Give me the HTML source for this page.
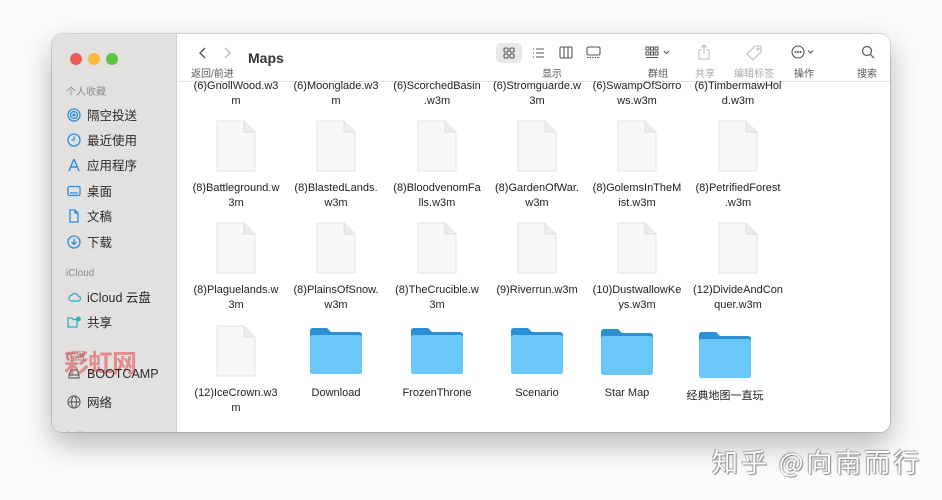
<!DOCTYPE html>
<html><head><meta charset="utf-8"><style>
*{margin:0;padding:0;box-sizing:border-box}
body{width:942px;height:500px;background:#fbfbfb;position:relative;overflow:hidden;font-family:"Liberation Sans","Noto Sans CJK SC",sans-serif;color:#222}
.win{position:absolute;left:52px;top:34px;width:838px;height:398px;border-radius:10px;background:#fff;overflow:hidden;box-shadow:0 12px 30px rgba(0,0,0,.28),0 0 0 1px rgba(0,0,0,.12)}
.side{position:absolute;left:0;top:0;width:125px;height:398px;background:#e3e1df;border-right:1px solid #d4d2d0}
.dot{position:absolute;top:19px;width:12px;height:12px;border-radius:50%}
.sh{position:absolute;left:14px;font-size:10px;color:#8c8a88}
.si{position:absolute;left:15px;font-size:12.5px;color:#2a2a2a;display:flex;align-items:center;gap:6px}
.si svg{width:14px;height:14px}
.main{position:absolute;left:126px;top:0;right:0;bottom:0}
.tb{position:absolute;left:0;top:0;right:0;height:48px;border-bottom:1px solid #e2e2e2;background:#fff}
.t{position:absolute;font-size:10px;color:#555}
.lab{position:absolute;width:100px;text-align:center;font-size:11px;line-height:14.5px;color:#222}
.doc{position:absolute;width:40px;height:52px}
.fold{position:absolute;width:56px;height:48px}
.wm{position:absolute;left:712px;top:443px;font-size:26px;color:#fff;text-shadow:0 0 1px #777,1px 1px 1px #888,-1px -1px 1px #aaa;letter-spacing:3px;font-family:"Noto Sans CJK SC",sans-serif}
</style></head><body>
<div class="win">
 <div class="side">
  <div class="dot" style="left:18px;background:#ee5d55"></div>
  <div class="dot" style="left:36px;background:#f6bd3b"></div>
  <div class="dot" style="left:54px;background:#5fc544"></div>
  <div class="sh" style="top:49px">个人收藏</div>
  <div class="si" style="top:71px"><svg viewBox="0 0 14 14" fill="none" stroke="#2c8ee0" stroke-width="1.3"><circle cx="7" cy="7" r="6"/><circle cx="7" cy="7" r="3.5"/><circle cx="7" cy="7" r="1"/></svg>隔空投送</div>
  <div class="si" style="top:96px"><svg viewBox="0 0 14 14" fill="none" stroke="#2c8ee0" stroke-width="1.3"><circle cx="7" cy="7" r="6"/><path d="M7 3.5V7H4.5"/></svg>最近使用</div>
  <div class="si" style="top:121px"><svg viewBox="0 0 14 14" fill="none" stroke="#2c8ee0" stroke-width="1.4"><path d="M7 1L2 13M7 1l5 12M3 9h8"/></svg>应用程序</div>
  <div class="si" style="top:147px"><svg viewBox="0 0 14 14" fill="none" stroke="#2c8ee0" stroke-width="1.3"><rect x="1" y="2.5" width="12" height="9" rx="1.5"/><path d="M3 9h8"/></svg>桌面</div>
  <div class="si" style="top:172px"><svg viewBox="0 0 14 14" fill="none" stroke="#2c8ee0" stroke-width="1.3"><path d="M3 1h5l3 3v9H3z M8 1v3h3"/></svg>文稿</div>
  <div class="si" style="top:198px"><svg viewBox="0 0 14 14" fill="none" stroke="#2c8ee0" stroke-width="1.3"><circle cx="7" cy="7" r="6"/><path d="M7 3.5v6M4.5 7l2.5 2.5L9.5 7"/></svg>下载</div>
  <div class="sh" style="top:234px">iCloud</div>
  <div class="si" style="top:253px"><svg viewBox="0 0 14 14" fill="none" stroke="#2ab0c8" stroke-width="1.3"><path d="M4 11h7a2.5 2.5 0 000-5 3.5 3.5 0 00-6.5-.5A2.8 2.8 0 004 11z"/></svg>iCloud 云盘</div>
  <div class="si" style="top:278px"><svg viewBox="0 0 14 14" fill="none" stroke="#2ab0c8" stroke-width="1.3"><path d="M1 3h4l1 1.5h4V12H1z"/><circle cx="11.5" cy="4" r="1.8" fill="#2ab0c8"/></svg>共享</div>
  <div class="sh" style="top:314px">位置</div>
  <div style="position:absolute;left:12px;top:310px;font-size:25px;font-weight:bold;color:rgba(225,70,70,.55);font-family:'Noto Sans CJK SC',sans-serif;letter-spacing:-1px">彩虹网</div>
  <div class="si" style="top:333px"><svg viewBox="0 0 14 14" fill="none" stroke="#666" stroke-width="1.2"><path d="M2 8l2-5h6l2 5v3H2z M2 8h10"/></svg>BOOTCAMP</div>
  <div class="si" style="top:358px"><svg viewBox="0 0 14 14" fill="none" stroke="#666" stroke-width="1.2"><circle cx="7" cy="7" r="6"/><ellipse cx="7" cy="7" rx="2.5" ry="6"/><path d="M1 7h12"/></svg>网络</div>
  <div class="sh" style="top:394px">标签</div>
 </div>
 <div class="main">
  <div class="tb">
   <svg style="position:absolute;left:20px;top:13px" width="10" height="12" viewBox="0 0 10 12" fill="none" stroke="#555" stroke-width="1.4"><path d="M7 1L2 6l5 5"/></svg>
   <svg style="position:absolute;left:44px;top:13px" width="10" height="12" viewBox="0 0 10 12" fill="none" stroke="#bbb" stroke-width="1.4"><path d="M3 1l5 5-5 5"/></svg>
   <div style="position:absolute;left:70px;top:16px;font-size:14px;font-weight:bold;color:#333">Maps</div>
   <div class="t" style="left:13px;top:31px">返回/前进</div>
   <div style="position:absolute;left:318px;top:9px;width:26px;height:20px;border-radius:5px;background:#e8e8e8"></div>
   <svg style="position:absolute;left:325px;top:13px" width="12" height="12" viewBox="0 0 12 12" fill="none" stroke="#555" stroke-width="1.1"><rect x="1" y="1" width="4" height="4" rx="1"/><rect x="7" y="1" width="4" height="4" rx="1"/><rect x="1" y="7" width="4" height="4" rx="1"/><rect x="7" y="7" width="4" height="4" rx="1"/></svg>
   <svg style="position:absolute;left:354px;top:13px" width="13" height="12" viewBox="0 0 13 12" fill="none" stroke="#555" stroke-width="1.1"><path d="M1 2h1M4 2h8M1 6h1M4 6h8M1 10h1M4 10h8"/></svg>
   <svg style="position:absolute;left:381px;top:12px" width="14" height="13" viewBox="0 0 14 13" fill="none" stroke="#555" stroke-width="1.1"><rect x="1" y="1" width="12" height="11" rx="1.5"/><path d="M5 1v11M9 1v11"/></svg>
   <svg style="position:absolute;left:408px;top:12px" width="15" height="13" viewBox="0 0 15 13" fill="none" stroke="#555" stroke-width="1.1"><rect x="1" y="1" width="13" height="8" rx="1.5"/><path d="M1 11.5h13" stroke-dasharray="1.5 1"/></svg>
   <div class="t" style="left:364px;top:31px">显示</div>
   <svg style="position:absolute;left:467px;top:12px" width="28" height="13" viewBox="0 0 28 13" fill="none" stroke="#555" stroke-width="1"><rect x="1" y="1" width="3" height="3"/><rect x="5.5" y="1" width="3" height="3"/><rect x="10" y="1" width="3" height="3"/><rect x="1" y="6" width="3" height="3"/><rect x="5.5" y="6" width="3" height="3"/><rect x="10" y="6" width="3" height="3"/><path d="M1 11.5h12M19 5l2.5 2.5L24 5"/></svg>
   <div class="t" style="left:470px;top:31px">群组</div>
   <svg style="position:absolute;left:520px;top:10px" width="12" height="16" viewBox="0 0 12 16" fill="none" stroke="#bbb" stroke-width="1.1"><path d="M4 6H1v9h10V6H8M6 10V1M3.5 3.5L6 1l2.5 2.5"/></svg>
   <div class="t" style="left:517px;top:31px;color:#aaa">共享</div>
   <svg style="position:absolute;left:568px;top:11px" width="16" height="16" viewBox="0 0 16 16" fill="none" stroke="#bbb" stroke-width="1.1"><path d="M9 1h6v6l-8 8-6-6z"/><circle cx="12" cy="4" r="1"/></svg>
   <div class="t" style="left:556px;top:31px;color:#aaa">编辑标签</div>
   <svg style="position:absolute;left:613px;top:11px" width="28" height="14" viewBox="0 0 28 14" fill="none" stroke="#555" stroke-width="1.1"><circle cx="7" cy="7" r="6"/><circle cx="4.5" cy="7" r=".5"/><circle cx="7" cy="7" r=".5"/><circle cx="9.5" cy="7" r=".5"/><path d="M17 5.5l2.5 2.5L22 5.5"/></svg>
   <div class="t" style="left:616px;top:31px">操作</div>
   <svg style="position:absolute;left:683px;top:11px" width="14" height="14" viewBox="0 0 14 14" fill="none" stroke="#555" stroke-width="1.2"><circle cx="6" cy="6" r="4.5"/><path d="M9.5 9.5L13 13"/></svg>
   <div class="t" style="left:679px;top:31px">搜索</div>
  </div>
 </div>
</div>
<div id="grid"></div>
<div class="wm">知乎 @向南而行</div>
<script>
var g=document.getElementById('grid');
var cx=[236,336,437,537,637,738];
function lab(x,y,t){g.insertAdjacentHTML('beforeend','<div class="lab" style="left:'+(x-50)+'px;top:'+y+'px">'+t+'</div>');}
function doc(x,y){g.insertAdjacentHTML('beforeend','<svg class="doc" style="left:'+(x-20)+'px;top:'+y+'px" viewBox="0 0 40 52"><path d="M1 1h27l11 11v39H1z" fill="#f7f7f7" stroke="#e3e3e3"/><path d="M28 1v11h11" fill="#ececec" stroke="#ddd"/></svg>');}
function fold(x,y){g.insertAdjacentHTML('beforeend','<svg class="fold" style="left:'+(x-28)+'px;top:'+y+'px" viewBox="0 0 56 48"><path d="M2 4q0-3 3-3h14l4 4h28q3 0 3 3v36q0 3-3 3H5q-3 0-3-3z" fill="#2d8fd4"/><path d="M2 11q0-3 3-3h46q3 0 3 3v33q0 3-3 3H5q-3 0-3-3z" fill="#6ac8f8"/></svg>');}
var r1=['(6)GnollWood.w3<br>m','(6)Moonglade.w3<br>m','(6)ScorchedBasin<br>.w3m','(6)Stromguarde.w<br>3m','(6)SwampOfSorro<br>ws.w3m','(6)TimbermawHol<br>d.w3m'];
var r2=['(8)Battleground.w<br>3m','(8)BlastedLands.<br>w3m','(8)BloodvenomFa<br>lls.w3m','(8)GardenOfWar.<br>w3m','(8)GolemsInTheM<br>ist.w3m','(8)PetrifiedForest<br>.w3m'];
var r3=['(8)Plaguelands.w<br>3m','(8)PlainsOfSnow.<br>w3m','(8)TheCrucible.w<br>3m','(9)Riverrun.w3m','(10)DustwallowKe<br>ys.w3m','(12)DivideAndCon<br>quer.w3m'];
for(var i=0;i<6;i++){lab(cx[i],79,r1[i]);doc(cx[i],120);lab(cx[i],181,r2[i]);doc(cx[i],222);lab(cx[i],283,r3[i]);}
doc(236,325);lab(236,386,'(12)IceCrown.w3<br>m');
var fx=[336,437,537,627,725],fn=['Download','FrozenThrone','Scenario','Star Map','经典地图一直玩'],fy=[327,327,327,328,331];
for(var j=0;j<5;j++){fold(fx[j],fy[j]);lab(fx[j],j==4?389:386,fn[j]);}
</script>
</body></html>
